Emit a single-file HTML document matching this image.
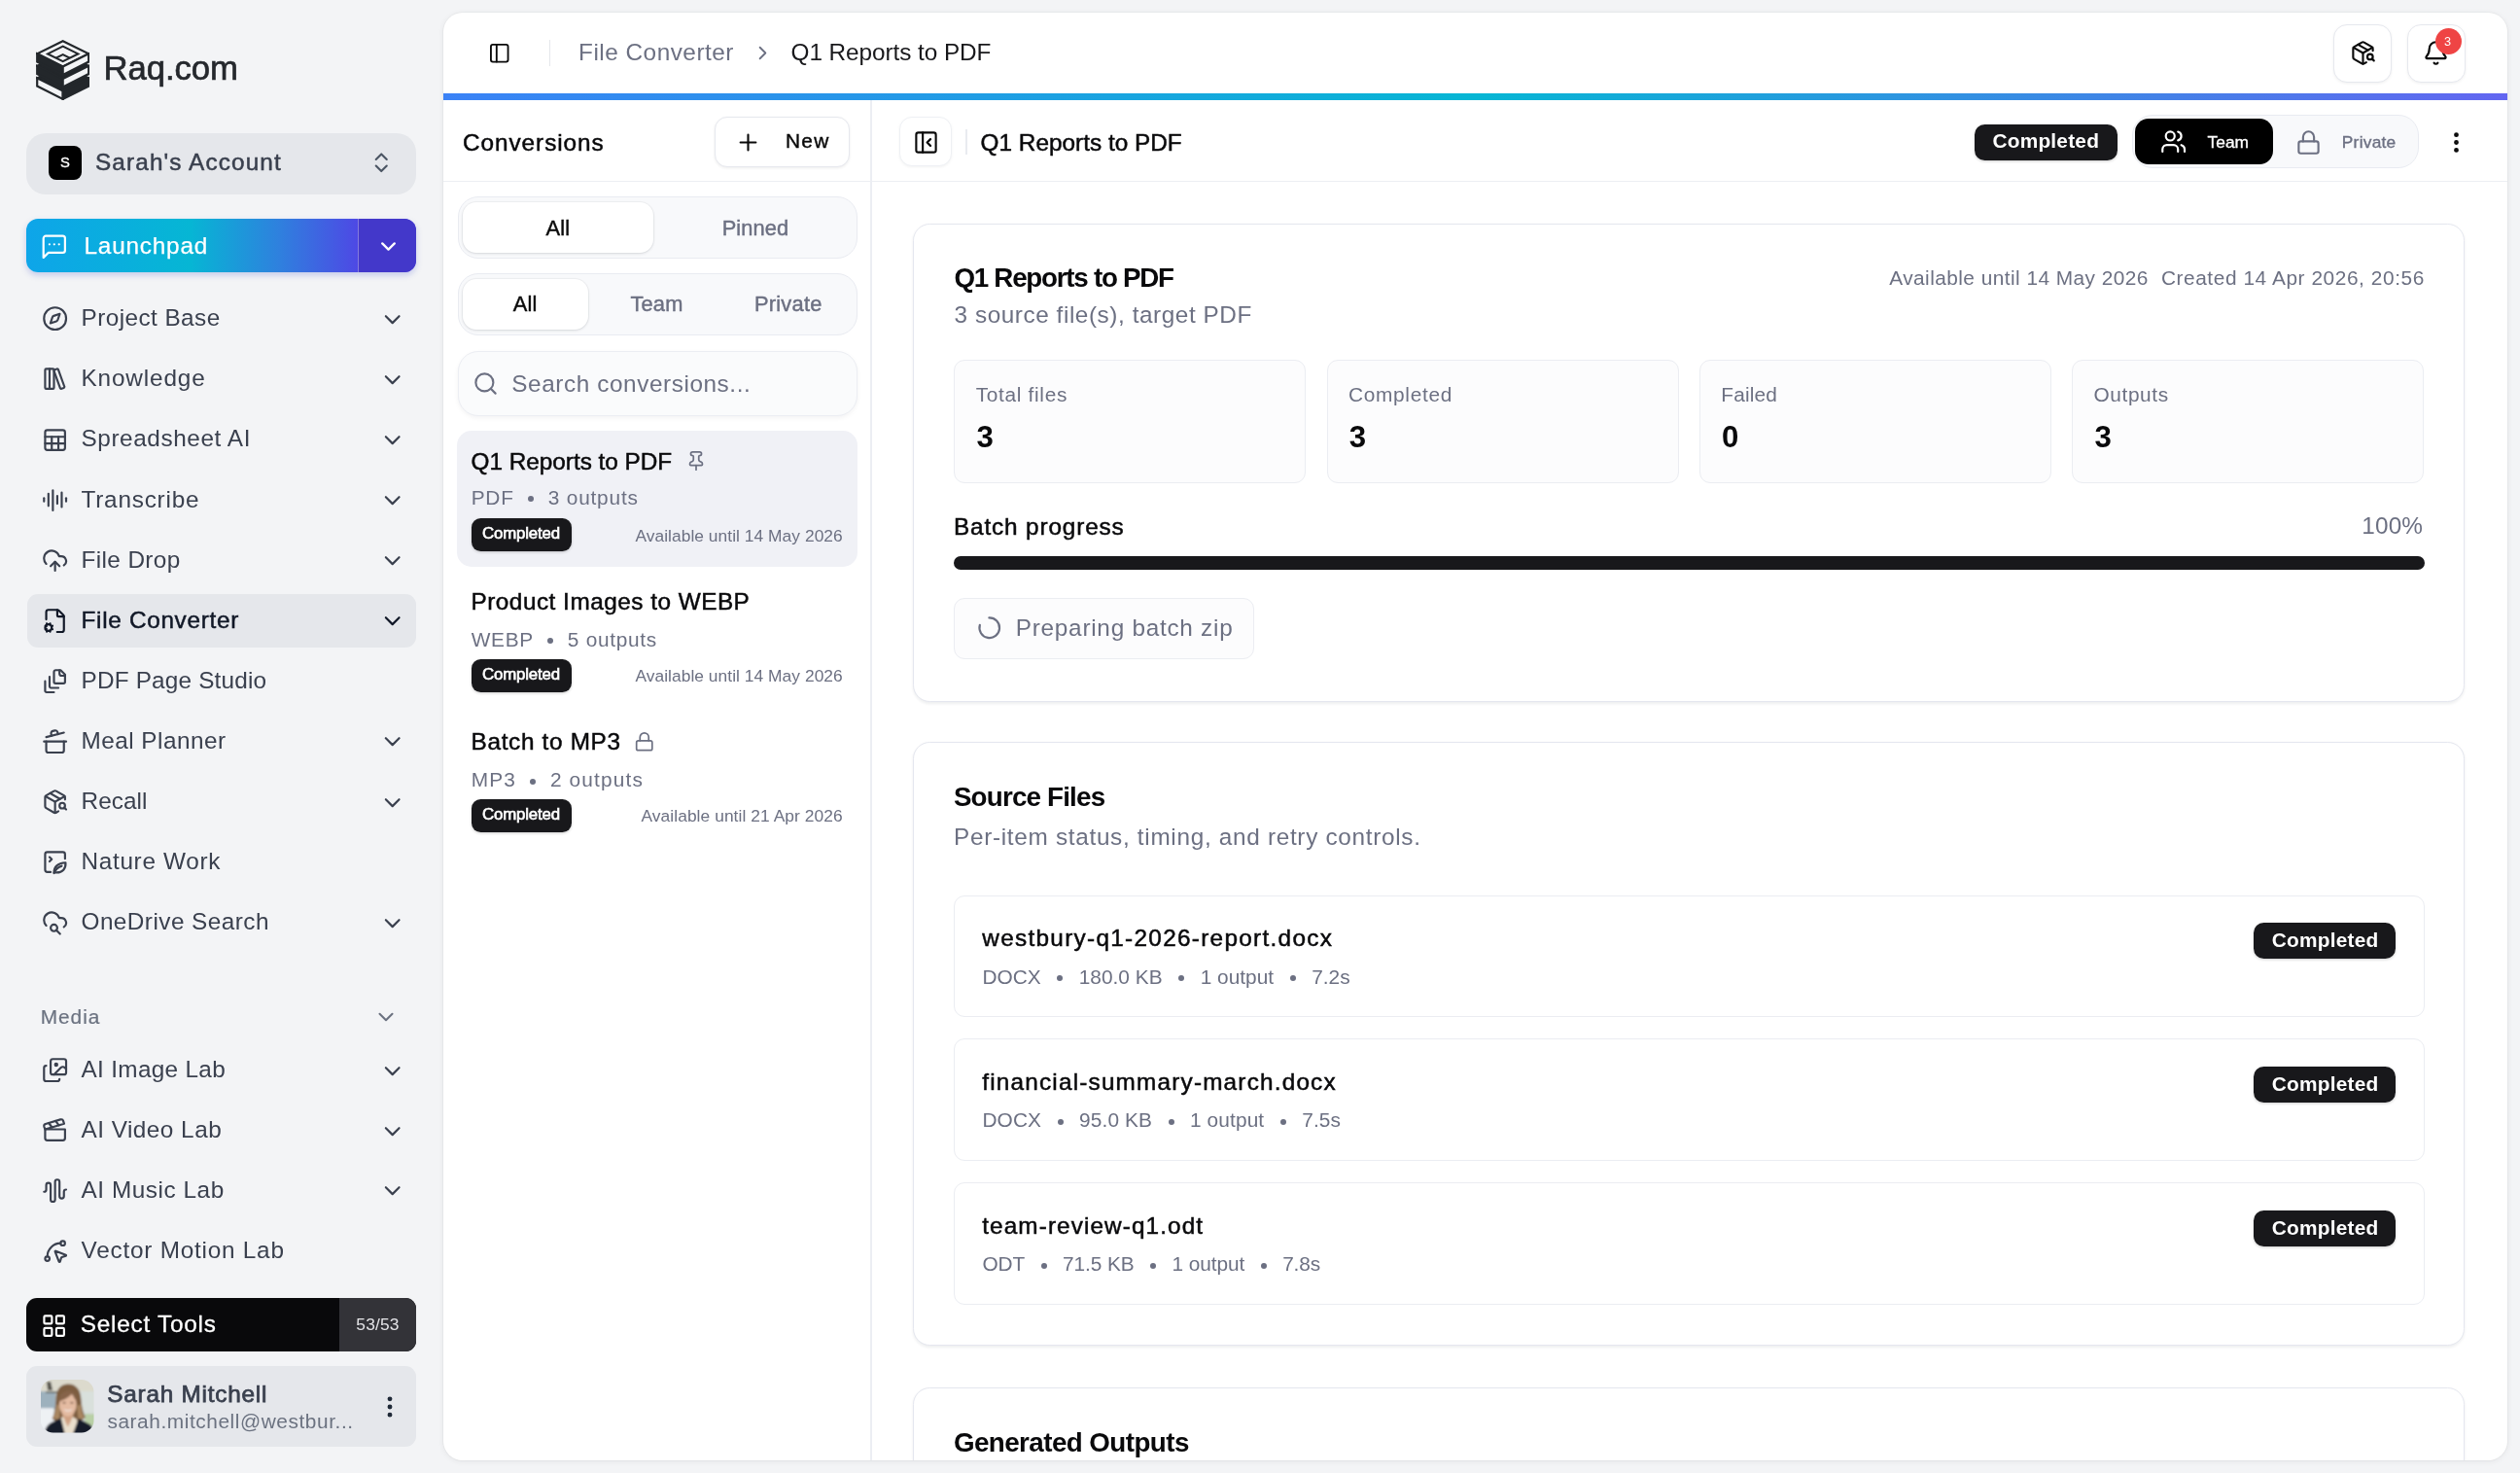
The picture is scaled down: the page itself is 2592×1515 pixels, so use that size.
<!DOCTYPE html>
<html lang="en"><head><meta charset="utf-8"><title>Raq.com – File Converter – Q1 Reports to PDF</title>
<style>
*{margin:0;padding:0}
html,body{width:2592px;height:1515px;overflow:hidden;background:#f3f4f6}
body{position:relative;font-family:"Liberation Sans", sans-serif;-webkit-font-smoothing:antialiased}
div,svg.ic,.t{position:absolute}
.t{line-height:0;white-space:nowrap;display:flex;align-items:flex-start}
.t span{display:block}
.b{display:block;width:6px;height:6px;border-radius:50%;background:currentColor;flex:none;margin-top:-1.500px}
#side{left:0;top:0;width:456px;height:1515px;will-change:transform}
#main{left:456px;top:13px;width:2122.75px;height:1488.5px;background:#fff;border-radius:20px;overflow:hidden;will-change:transform;box-shadow:0 0 0 1px rgba(15,23,42,.03),0 1px 6px rgba(15,23,42,.07)}
</style></head>
<body>
<aside id="side" style="position:absolute">
<svg class="ic" style="left:36.6px;top:40.8px" width="55.4" height="62.6" viewBox="-1.2 -1.200 55.4 62.6">
<defs><clipPath id="lh"><path d="M26.5 5.400 42.1 13.200 26.5 21 10.900 13.200Z"/></clipPath></defs>
<g stroke="#23272b" stroke-width="2.2" stroke-linejoin="miter">
<path d="M26.5 25.00L53 38.10 26.5 51.40 0 38.10Z" fill="#23272b"/><path d="M0 38.10L26.5 51.40V59.70L0 46.40Z" fill="#f3f4f6"/><path d="M26.5 51.40L53 38.10V46.40L26.5 59.70Z" fill="#23272b"/>
<path d="M26.5 12.50L53 25.60 26.5 38.90 0 25.60Z" fill="#23272b"/><path d="M0 25.60L26.5 38.90V47.20L0 33.90Z" fill="#23272b"/><path d="M26.5 38.90L53 25.60V33.90L26.5 47.20Z" fill="#f3f4f6"/>
<path d="M26.5 0.00L53 13.10 26.5 26.40 0 13.10Z" fill="#f3f4f6"/><path d="M0 13.10L26.5 26.40V34.70L0 21.40Z" fill="#23272b"/><path d="M26.5 26.40L53 13.10V21.40L26.5 34.70Z" fill="#f3f4f6"/>
<path d="M26.5 5.400 42.1 13.200 26.5 21 10.900 13.200Z" fill="#f3f4f6" stroke-width="2.1"/>
<path d="M10.900 21.700 26.5 13.900 42.1 21.700" fill="none" stroke-width="2.1" clip-path="url(#lh)"/>
</g></svg>
<span class="t" style="left:106.61px;top:70.46px;font-size:34.74px;color:#25282d;letter-spacing:-0.1px;-webkit-text-stroke:0.65px;">Raq.com</span>
<div style="left:27px;top:136.5px;width:401px;height:63px;border-radius:20px;background:#e5e7eb;"></div>
<div style="left:49.5px;top:150px;width:34.5px;height:34.5px;border-radius:8px;background:#000;"></div>
<span class="t" style="left:62.11px;top:167.48px;font-size:14.77px;color:#fff;-webkit-text-stroke:0.3px;">S</span>
<span class="t" style="left:98.03px;top:167.32px;font-size:24.34px;color:#3a404e;letter-spacing:1.12px;-webkit-text-stroke:0.49px;">Sarah&#x27;s Account</span>
<svg class="ic" style="left:378.5px;top:153.75px;color:#4b5563;" width="26.5" height="26.5" viewBox="0 0 24 24" fill="none" stroke="#4b5563" stroke-width="1.9" stroke-linecap="round" stroke-linejoin="round"><path d="m7 15 5 5 5-5"/><path d="m7 9 5-5 5 5"/></svg>
<div style="left:27px;top:225px;width:400.5px;height:55px;border-radius:12px;background:linear-gradient(90deg,#0ea5e9 0%,#06b6d4 42%,#2f80de 65%,#4f46e5 86%);box-shadow:0 3px 6px rgba(59,80,200,.25);overflow:hidden;"><div style="left:340.5px;top:0;width:60px;height:55px;background:#4338ca;border-left:1.500px solid rgba(255,255,255,.35)"></div></div>
<svg class="ic" style="left:40.8px;top:239.4px;color:#fff;" width="29.6" height="29.6" viewBox="0 0 24 24" fill="none" stroke="#fff" stroke-width="1.8" stroke-linecap="round" stroke-linejoin="round"><path d="M21 15a2 2 0 0 1-2 2H7l-4 4V5a2 2 0 0 1 2-2h14a2 2 0 0 1 2 2z"/><path d="M8 10h.01"/><path d="M12 10h.01"/><path d="M16 10h.01"/></svg>
<span class="t" style="left:86.53px;top:252.82px;font-size:24.34px;color:#fff;letter-spacing:0.79px;-webkit-text-stroke:0.25px;">Launchpad</span>
<svg class="ic" style="left:386.5px;top:241px;color:#fff;" width="25" height="25" viewBox="0 0 24 24" fill="none" stroke="#fff" stroke-width="2.2" stroke-linecap="round" stroke-linejoin="round"><path d="m6 9 6 6 6-6"/></svg>
<svg class="ic" style="left:42.6px;top:314.3px;color:#3a404e;" width="27.3" height="27.3" viewBox="0 0 24 24" fill="none" stroke="#3a404e" stroke-width="1.9" stroke-linecap="round" stroke-linejoin="round"><circle cx="12" cy="12" r="10"/><path d="m16.24 7.76-1.804 5.411a2 2 0 0 1-1.265 1.265L7.76 16.24l1.804-5.411a2 2 0 0 1 1.265-1.265z"/></svg>
<span class="t" style="left:83.53px;top:327.27px;font-size:24.34px;color:#3a404e;letter-spacing:0.43px;">Project Base</span>
<svg class="ic" style="left:390.3px;top:314.75px;color:#3a404e;" width="27.4" height="27.4" viewBox="0 0 24 24" fill="none" stroke="#3a404e" stroke-width="1.9" stroke-linecap="round" stroke-linejoin="round"><path d="m6 9 6 6 6-6"/></svg>
<svg class="ic" style="left:42.6px;top:376.4px;color:#3a404e;" width="27.3" height="27.3" viewBox="0 0 24 24" fill="none" stroke="#3a404e" stroke-width="1.9" stroke-linecap="round" stroke-linejoin="round"><rect width="8" height="18" x="3" y="3" rx="1"/><path d="M7 3v18"/><path d="M20.4 18.9c.2.5-.1 1.100-.6 1.300l-1.900.700c-.5.200-1.100-.100-1.300-.600L11.100 5.100c-.2-.500.100-1.100.600-1.300l1.900-.700c.5-.200 1.100.100 1.300.600Z"/></svg>
<span class="t" style="left:83.53px;top:389.37px;font-size:24.34px;color:#3a404e;letter-spacing:0.85px;">Knowledge</span>
<svg class="ic" style="left:390.3px;top:376.85px;color:#3a404e;" width="27.4" height="27.4" viewBox="0 0 24 24" fill="none" stroke="#3a404e" stroke-width="1.9" stroke-linecap="round" stroke-linejoin="round"><path d="m6 9 6 6 6-6"/></svg>
<svg class="ic" style="left:42.6px;top:438.5px;color:#3a404e;" width="27.3" height="27.3" viewBox="0 0 24 24" fill="none" stroke="#3a404e" stroke-width="1.9" stroke-linecap="round" stroke-linejoin="round"><rect width="18" height="18" x="3" y="3" rx="2" ry="2"/><line x1="3" x2="21" y1="9" y2="9"/><line x1="3" x2="21" y1="15" y2="15"/><line x1="9" x2="9" y1="9" y2="21"/><line x1="15" x2="15" y1="9" y2="21"/></svg>
<span class="t" style="left:83.53px;top:451.47px;font-size:24.34px;color:#3a404e;letter-spacing:0.58px;">Spreadsheet AI</span>
<svg class="ic" style="left:390.3px;top:438.95px;color:#3a404e;" width="27.4" height="27.4" viewBox="0 0 24 24" fill="none" stroke="#3a404e" stroke-width="1.9" stroke-linecap="round" stroke-linejoin="round"><path d="m6 9 6 6 6-6"/></svg>
<svg class="ic" style="left:42.6px;top:500.6px;color:#3a404e;" width="27.3" height="27.3" viewBox="0 0 24 24" fill="none" stroke="#3a404e" stroke-width="1.9" stroke-linecap="round" stroke-linejoin="round"><path d="M2 10v3"/><path d="M6 6v11"/><path d="M10 3v18"/><path d="M14 8v7"/><path d="M18 5v13"/><path d="M22 10v3"/></svg>
<span class="t" style="left:83.53px;top:513.57px;font-size:24.34px;color:#3a404e;letter-spacing:0.77px;">Transcribe</span>
<svg class="ic" style="left:390.3px;top:501.05px;color:#3a404e;" width="27.4" height="27.4" viewBox="0 0 24 24" fill="none" stroke="#3a404e" stroke-width="1.9" stroke-linecap="round" stroke-linejoin="round"><path d="m6 9 6 6 6-6"/></svg>
<svg class="ic" style="left:42.6px;top:562.7px;color:#3a404e;" width="27.3" height="27.3" viewBox="0 0 24 24" fill="none" stroke="#3a404e" stroke-width="1.9" stroke-linecap="round" stroke-linejoin="round"><path d="M12 13v8"/><path d="M4 14.899A7 7 0 1 1 15.71 8h1.79a4.5 4.5 0 0 1 2.5 8.242"/><path d="m8 17 4-4 4 4"/></svg>
<span class="t" style="left:83.53px;top:575.67px;font-size:24.34px;color:#3a404e;letter-spacing:0.38px;">File Drop</span>
<svg class="ic" style="left:390.3px;top:563.15px;color:#3a404e;" width="27.4" height="27.4" viewBox="0 0 24 24" fill="none" stroke="#3a404e" stroke-width="1.9" stroke-linecap="round" stroke-linejoin="round"><path d="m6 9 6 6 6-6"/></svg>
<div style="left:28px;top:610.7px;width:400px;height:55.5px;border-radius:11px;background:#e5e7eb;"></div>
<svg class="ic" style="left:42.6px;top:624.8px;color:#111827;" width="27.3" height="27.3" viewBox="0 0 24 24" fill="none" stroke="#111827" stroke-width="1.9" stroke-linecap="round" stroke-linejoin="round"><path d="M13.850 22H18a2 2 0 0 0 2-2V8a2 2 0 0 0-.586-1.414l-4-4A2 2 0 0 0 14 2H6a2 2 0 0 0-2 2v6.600"/><path d="M14 2v5a1 1 0 0 0 1 1h5"/><path d="m3.305 19.530.923-.382"/><path d="m4.228 16.852-.924-.383"/><path d="m4.852 15.228-.383-.923"/><path d="m4.852 20.772-.383.924"/><path d="m7.148 15.228.383-.923"/><path d="m7.530 21.696-.382-.924"/><path d="m8.772 16.852.923-.383"/><path d="m8.772 19.148.923.383"/><circle cx="6" cy="18" r="3"/></svg>
<span class="t" style="left:83.53px;top:637.77px;font-size:24.34px;color:#111827;letter-spacing:0.69px;-webkit-text-stroke:0.49px;">File Converter</span>
<svg class="ic" style="left:390.3px;top:625.25px;color:#111827;" width="27.4" height="27.4" viewBox="0 0 24 24" fill="none" stroke="#111827" stroke-width="1.9" stroke-linecap="round" stroke-linejoin="round"><path d="m6 9 6 6 6-6"/></svg>
<svg class="ic" style="left:42.6px;top:686.9px;color:#3a404e;" width="27.3" height="27.3" viewBox="0 0 24 24" fill="none" stroke="#3a404e" stroke-width="1.9" stroke-linecap="round" stroke-linejoin="round"><path d="M21 7h-3a2 2 0 0 1-2-2V2"/><path d="M21 6v6.5c0 .8-.7 1.5-1.5 1.5h-7c-.8 0-1.500-.7-1.500-1.500v-9c0-.8.7-1.500 1.500-1.500H17Z"/><path d="M7 8v8.800c0 .3.200.6.4.8.2.2.5.4.8.4H15"/><path d="M3 12v8.800c0 .3.200.6.4.8.2.2.5.4.8.4H11"/></svg>
<span class="t" style="left:83.53px;top:699.87px;font-size:24.34px;color:#3a404e;letter-spacing:0.18px;">PDF Page Studio</span>
<svg class="ic" style="left:42.6px;top:749px;color:#3a404e;" width="27.3" height="27.3" viewBox="0 0 24 24" fill="none" stroke="#3a404e" stroke-width="1.9" stroke-linecap="round" stroke-linejoin="round"><path d="M2 12h20"/><path d="M20 12v8a2 2 0 0 1-2 2H6a2 2 0 0 1-2-2v-8"/><path d="m4 8 16-4"/><path d="m8.860 6.780-.45-1.810a2 2 0 0 1 1.450-2.430l1.940-.48a2 2 0 0 1 2.430 1.460l.45 1.800"/></svg>
<span class="t" style="left:83.53px;top:761.97px;font-size:24.34px;color:#3a404e;letter-spacing:0.47px;">Meal Planner</span>
<svg class="ic" style="left:390.3px;top:749.45px;color:#3a404e;" width="27.4" height="27.4" viewBox="0 0 24 24" fill="none" stroke="#3a404e" stroke-width="1.9" stroke-linecap="round" stroke-linejoin="round"><path d="m6 9 6 6 6-6"/></svg>
<svg class="ic" style="left:42.6px;top:811.1px;color:#3a404e;" width="27.3" height="27.3" viewBox="0 0 24 24" fill="none" stroke="#3a404e" stroke-width="1.9" stroke-linecap="round" stroke-linejoin="round"><path d="M21 10V8a2 2 0 0 0-1-1.730l-7-4a2 2 0 0 0-2 0l-7 4A2 2 0 0 0 3 8v8a2 2 0 0 0 1 1.730l7 4a2 2 0 0 0 2 0l2-1.140"/><path d="m7.500 4.270 9 5.150"/><polyline points="3.290 7 12 12 20.710 7"/><line x1="12" x2="12" y1="22" y2="12"/><circle cx="18.500" cy="15.500" r="2.500"/><path d="M20.270 17.270 22 19"/></svg>
<span class="t" style="left:83.53px;top:824.07px;font-size:24.34px;color:#3a404e;letter-spacing:0.07px;">Recall</span>
<svg class="ic" style="left:390.3px;top:811.55px;color:#3a404e;" width="27.4" height="27.4" viewBox="0 0 24 24" fill="none" stroke="#3a404e" stroke-width="1.9" stroke-linecap="round" stroke-linejoin="round"><path d="m6 9 6 6 6-6"/></svg>
<svg class="ic" style="left:42.6px;top:873.2px;color:#3a404e;" width="27.3" height="27.3" viewBox="0 0 24 24" fill="none" stroke="#3a404e" stroke-width="1.9" stroke-linecap="round" stroke-linejoin="round"><path d="M21 9V5a2 2 0 0 0-2-2H5a2 2 0 0 0-2 2v14a2 2 0 0 0 2 2h3"/><path d="m7 7.500 2 2-2 2"/><path d="M11 21.500c0-5 3-8.500 10.500-9 .3 5.500-2.700 9-8 9-1 0-1.800-.2-2.500-.5"/><path d="M11 22c1.500-3.500 4-5.500 7-6.500"/></svg>
<span class="t" style="left:83.53px;top:886.17px;font-size:24.34px;color:#3a404e;letter-spacing:0.68px;">Nature Work</span>
<svg class="ic" style="left:42.6px;top:935.3px;color:#3a404e;" width="27.3" height="27.3" viewBox="0 0 24 24" fill="none" stroke="#3a404e" stroke-width="1.9" stroke-linecap="round" stroke-linejoin="round"><path d="M4 14.899A7 7 0 1 1 15.710 8h1.790a4.500 4.500 0 0 1 2.500 8.242"/><circle cx="11" cy="17" r="3"/><path d="m13.200 19.200 3.300 3.300"/></svg>
<span class="t" style="left:83.53px;top:948.27px;font-size:24.34px;color:#3a404e;letter-spacing:0.45px;">OneDrive Search</span>
<svg class="ic" style="left:390.3px;top:935.75px;color:#3a404e;" width="27.4" height="27.4" viewBox="0 0 24 24" fill="none" stroke="#3a404e" stroke-width="1.9" stroke-linecap="round" stroke-linejoin="round"><path d="m6 9 6 6 6-6"/></svg>
<span class="t" style="left:41.67px;top:1045.77px;font-size:20.85px;color:#6b7280;letter-spacing:0.98px;-webkit-text-stroke:0.2px;">Media</span>
<svg class="ic" style="left:384px;top:1032.5px;color:#6b7280;" width="26" height="26" viewBox="0 0 24 24" fill="none" stroke="#6b7280" stroke-width="1.9" stroke-linecap="round" stroke-linejoin="round"><path d="m6 9 6 6 6-6"/></svg>
<svg class="ic" style="left:42.6px;top:1087.4px;color:#3a404e;" width="27.3" height="27.3" viewBox="0 0 24 24" fill="none" stroke="#3a404e" stroke-width="1.9" stroke-linecap="round" stroke-linejoin="round"><path d="m22 11-1.296-1.296a2.4 2.4 0 0 0-3.408 0L11 16"/><path d="M4 8a2 2 0 0 0-2 2v10a2 2 0 0 0 2 2h10a2 2 0 0 0 2-2"/><circle cx="13" cy="7" r="1" fill="currentColor"/><rect x="8" y="2" width="14" height="14" rx="2"/></svg>
<span class="t" style="left:83.53px;top:1100.37px;font-size:24.34px;color:#3a404e;letter-spacing:0.32px;">AI Image Lab</span>
<svg class="ic" style="left:390.3px;top:1087.85px;color:#3a404e;" width="27.4" height="27.4" viewBox="0 0 24 24" fill="none" stroke="#3a404e" stroke-width="1.9" stroke-linecap="round" stroke-linejoin="round"><path d="m6 9 6 6 6-6"/></svg>
<svg class="ic" style="left:42.6px;top:1149.2px;color:#3a404e;" width="27.3" height="27.3" viewBox="0 0 24 24" fill="none" stroke="#3a404e" stroke-width="1.9" stroke-linecap="round" stroke-linejoin="round"><path d="M20.200 6 3 11l-.9-2.400c-.3-1.100.3-2.200 1.300-2.500l13.500-4c1.100-.3 2.200.3 2.500 1.300Z"/><path d="m6.200 5.300 3.100 3.900"/><path d="m12.400 3.400 3.100 4"/><path d="M3 11h18v8a2 2 0 0 1-2 2H5a2 2 0 0 1-2-2Z"/></svg>
<span class="t" style="left:83.53px;top:1162.17px;font-size:24.34px;color:#3a404e;letter-spacing:0.48px;">AI Video Lab</span>
<svg class="ic" style="left:390.3px;top:1149.65px;color:#3a404e;" width="27.4" height="27.4" viewBox="0 0 24 24" fill="none" stroke="#3a404e" stroke-width="1.9" stroke-linecap="round" stroke-linejoin="round"><path d="m6 9 6 6 6-6"/></svg>
<svg class="ic" style="left:42.6px;top:1211px;color:#3a404e;" width="27.3" height="27.3" viewBox="0 0 24 24" fill="none" stroke="#3a404e" stroke-width="1.9" stroke-linecap="round" stroke-linejoin="round"><path d="M2 13a2 2 0 0 0 2-2V7a2 2 0 0 1 4 0v13a2 2 0 0 0 4 0V4a2 2 0 0 1 4 0v13a2 2 0 0 0 4 0v-4a2 2 0 0 1 2-2"/></svg>
<span class="t" style="left:83.53px;top:1223.97px;font-size:24.34px;color:#3a404e;letter-spacing:0.55px;">AI Music Lab</span>
<svg class="ic" style="left:390.3px;top:1211.45px;color:#3a404e;" width="27.4" height="27.4" viewBox="0 0 24 24" fill="none" stroke="#3a404e" stroke-width="1.9" stroke-linecap="round" stroke-linejoin="round"><path d="m6 9 6 6 6-6"/></svg>
<svg class="ic" style="left:42.6px;top:1272.8px;color:#3a404e;" width="27.3" height="27.3" viewBox="0 0 24 24" fill="none" stroke="#3a404e" stroke-width="1.9" stroke-linecap="round" stroke-linejoin="round"><path d="M12.034 12.681a.498.498 0 0 1 .647-.647l9 3.500a.5.5 0 0 1-.033.943l-3.444 1.068a1 1 0 0 0-.660.660l-1.067 3.443a.5.5 0 0 1-.943.033z"/><path d="M5 17A12 12 0 0 1 17 5"/><circle cx="19" cy="5" r="2"/><circle cx="5" cy="19" r="2"/></svg>
<span class="t" style="left:83.53px;top:1285.77px;font-size:24.34px;color:#3a404e;letter-spacing:0.77px;">Vector Motion Lab</span>
<div style="left:27px;top:1335px;width:400.5px;height:55px;border-radius:11px;background:#09090b;overflow:hidden;"><div style="left:322px;top:0;width:80px;height:55px;background:#333338"></div></div>
<svg class="ic" style="left:42.1px;top:1350.35px;color:#fff;" width="27.3" height="27.3" viewBox="0 0 24 24" fill="none" stroke="#fff" stroke-width="1.9" stroke-linecap="round" stroke-linejoin="round"><rect width="7" height="7" x="3" y="3" rx="1"/><rect width="7" height="7" x="14" y="3" rx="1"/><rect width="7" height="7" x="14" y="14" rx="1"/><rect width="7" height="7" x="3" y="14" rx="1"/></svg>
<span class="t" style="left:82.78px;top:1361.82px;font-size:24.34px;color:#fff;letter-spacing:0.77px;-webkit-text-stroke:0.3px;">Select Tools</span>
<span class="t" style="left:366.31px;top:1362.23px;font-size:17.37px;color:#e4e4e7;letter-spacing:0.19px;">53/53</span>
<div style="left:27px;top:1404.5px;width:400.5px;height:83px;border-radius:11px;background:#e5e7eb;"></div>
<svg class="ic" style="left:42px;top:1419px" width="54.5" height="54.5" viewBox="0 0 54 54">
<defs><clipPath id="av"><rect width="54" height="54" rx="12.5"/></clipPath><filter id="bl" x="-10%" y="-10%" width="120%" height="120%"><feGaussianBlur stdDeviation="0.9"/></filter></defs>
<g clip-path="url(#av)"><g filter="url(#bl)">
<rect x="-3" y="-3" width="60" height="60" fill="#d3dad6"/>
<rect x="-3" y="-3" width="60" height="15" fill="#dcdacd"/>
<rect x="-3" y="12" width="18" height="18" fill="#9db1bd"/>
<rect x="-3" y="29" width="16" height="28" fill="#eef1f4"/>
<rect x="40" y="12" width="17" height="22" fill="#d9e0dc"/>
<rect x="45" y="35" width="12" height="12" fill="#b9d0a6"/>
<path d="M6 2h4l2 9H7Z" fill="#55534c"/><rect x="5" y="12" width="12" height="1.600" fill="#5b5f5c"/>
<path d="M28 4.500c8 0 12.500 6 13 15 .5 8 2 14 4.500 19L39 43H17l-5.500-3c2.500-5 3.500-12 3.800-20C15.600 10 20 4.500 28 4.500Z" fill="#7d5d40"/>
<path d="M12 39c2.500-4 3.500-9 3.800-14l4 2-1 14Zm32.500 0c-2.500-4-3.500-9-3.700-14l-4 2 1.500 14Z" fill="#a98661"/>
<path d="M22 34h11v10l-5.500 8L22 44Z" fill="#d0a183"/>
<ellipse cx="27.600" cy="25.500" rx="8.800" ry="11.800" fill="#e4bba2"/>
<path d="M18.600 22c.4-6 3.500-10.500 9.400-10.500 5.500 0 8.500 4.500 8.700 10.500-2.500-2.500-4-5.500-4.700-8-2.500 3-7.500 6.500-13.400 8Z" fill="#86644a"/>
<ellipse cx="23.800" cy="23.500" rx="1.800" ry=".8" fill="#6b4a3a"/><ellipse cx="31.600" cy="23.500" rx="1.800" ry=".8" fill="#6b4a3a"/>
<path d="M23.500 30c2.500 1.500 6 1.500 8.500 0-1 3-7.500 3-8.500 0Z" fill="#f6eeea"/>
<path d="M17.500 40.500 23 38l4.500 9 5-9 4.500 2.500L36 57H17Z" fill="#eadfcd"/>
<path d="M24 41l3.500 7 3.800-7c-2 1.500-5.500 1.500-7.300 0Z" fill="#d3a688"/>
<path d="M3.500 57c.5-7 3-11.500 8.500-14l8.500-4 4.500 18Zm51 0c0-6-2-10.500-6.500-12.500L38.500 39.500 32 57Z" fill="#151a2c"/>
</g></g></svg>
<span class="t" style="left:110.28px;top:1433.57px;font-size:24.34px;color:#3a404e;letter-spacing:0.77px;-webkit-text-stroke:0.75px;">Sarah Mitchell</span>
<span class="t" style="left:110.42px;top:1461.77px;font-size:20.85px;color:#6b7280;letter-spacing:0.57px;">sarah.mitchell@westbur...</span>
<svg class="ic" style="left:386.6px;top:1432.75px;color:#1f2937;" width="28" height="28" viewBox="0 0 24 24" fill="none" stroke="#1f2937" stroke-width="2.2" stroke-linecap="round" stroke-linejoin="round"><circle cx="12" cy="12" r="1"/><circle cx="12" cy="5" r="1"/><circle cx="12" cy="19" r="1"/></svg>
</aside>
<main id="main" style="position:absolute">
<svg class="ic" style="left:45.75px;top:30.25px;color:#0a0a0a;" width="23.5" height="23.5" viewBox="0 0 24 24" fill="none" stroke="#0a0a0a" stroke-width="1.9" stroke-linecap="round" stroke-linejoin="round"><rect width="18" height="18" x="3" y="3" rx="2"/><path d="M9 3v18"/></svg>
<div style="left:108.75px;top:28px;width:1.5px;height:26.5px;background:#e5e7eb;"></div>
<span class="t" style="left:139.03px;top:41.07px;font-size:24.34px;color:#6c7082;letter-spacing:0.51px;">File Converter</span>
<svg class="ic" style="left:316.5px;top:30px;color:#6c7082;" width="23" height="23" viewBox="0 0 24 24" fill="none" stroke="#6c7082" stroke-width="1.9" stroke-linecap="round" stroke-linejoin="round"><path d="m9 18 6-6-6-6"/></svg>
<span class="t" style="left:357.53px;top:41.07px;font-size:24.34px;color:#18181b;letter-spacing:-0.06px;">Q1 Reports to PDF</span>
<div style="left:1943.5px;top:11.5px;width:60.75px;height:60px;border-radius:14px;background:#fff;border:1.500px solid #e6e8ee;box-shadow:0 1px 3px rgba(0,0,0,.06);box-sizing:border-box;"></div>
<svg class="ic" style="left:1961.25px;top:28px;color:#0a0a0a;" width="27" height="27" viewBox="0 0 24 24" fill="none" stroke="#0a0a0a" stroke-width="1.9" stroke-linecap="round" stroke-linejoin="round"><path d="M21 10V8a2 2 0 0 0-1-1.730l-7-4a2 2 0 0 0-2 0l-7 4A2 2 0 0 0 3 8v8a2 2 0 0 0 1 1.730l7 4a2 2 0 0 0 2 0l2-1.140"/><path d="m7.500 4.270 9 5.150"/><polyline points="3.290 7 12 12 20.710 7"/><line x1="12" x2="12" y1="22" y2="12"/><circle cx="18.500" cy="15.500" r="2.500"/><path d="M20.270 17.270 22 19"/></svg>
<div style="left:2019.75px;top:11.5px;width:60px;height:60px;border-radius:14px;background:#fff;border:1.500px solid #e6e8ee;box-shadow:0 1px 3px rgba(0,0,0,.06);box-sizing:border-box;"></div>
<svg class="ic" style="left:2035.75px;top:28.25px;color:#0a0a0a;" width="27" height="27" viewBox="0 0 24 24" fill="none" stroke="#0a0a0a" stroke-width="1.9" stroke-linecap="round" stroke-linejoin="round"><path d="M10.268 21a2 2 0 0 0 3.464 0"/><path d="M3.262 15.326A1 1 0 0 0 4 17h16a1 1 0 0 0 .740-1.673C19.410 13.956 18 12.499 18 8A6 6 0 0 0 6 8c0 4.499-1.411 5.956-2.738 7.326"/></svg>
<div style="left:2049px;top:15.75px;width:27px;height:27px;border-radius:14px;background:#ef4444;"></div>
<span class="t" style="left:2057.99px;top:30.2px;font-size:12.69px;color:#fff;">3</span>
<div style="left:0px;top:82.75px;width:2122.75px;height:7.5px;background:linear-gradient(90deg,#3b82f6 0%,#06b6d4 50%,#6366f1 100%);"></div>
<div style="left:0px;top:172.5px;width:2122.75px;height:1.5px;background:#eceef3;"></div>
<div style="left:439.25px;top:90.25px;width:1.5px;height:1398.25px;background:#eceef3;"></div>
<span class="t" style="left:20.03px;top:133.57px;font-size:24.34px;color:#09090b;letter-spacing:0.95px;-webkit-text-stroke:0.49px;">Conversions</span>
<div style="left:278.5px;top:106.5px;width:139.25px;height:52.25px;border-radius:13px;background:#fff;border:1.500px solid #e6e8ee;box-shadow:0 1px 3px rgba(0,0,0,.07);box-sizing:border-box;"></div>
<svg class="ic" style="left:300.25px;top:119.5px;color:#0a0a0a;" width="27" height="27" viewBox="0 0 24 24" fill="none" stroke="#0a0a0a" stroke-width="1.9" stroke-linecap="round" stroke-linejoin="round"><path d="M5 12h14"/><path d="M12 5v14"/></svg>
<span class="t" style="left:351.92px;top:132.27px;font-size:20.85px;color:#0a0a0a;letter-spacing:1.38px;-webkit-text-stroke:0.42px;">New</span>
<div style="left:14.5px;top:189px;width:411px;height:64.25px;border-radius:21px;background:#f8f9fb;border:1.500px solid #e9ebf1;box-sizing:border-box;"></div><div style="left:19.5px;top:194.5px;width:196.75px;height:52.75px;border-radius:14px;background:#fff;box-shadow:0 1px 3px rgba(15,23,42,.12),0 0 0 1px rgba(15,23,42,.03);"></div>
<span class="t" style="left:105.38px;top:221.93px;font-size:21.84px;color:#0a0a0a;letter-spacing:0.26px;-webkit-text-stroke:0.44px;">All</span>
<span class="t" style="left:286.63px;top:221.93px;font-size:21.84px;color:#6c7082;letter-spacing:0.11px;-webkit-text-stroke:0.44px;">Pinned</span>
<div style="left:14.5px;top:268.25px;width:411px;height:63.25px;border-radius:21px;background:#f8f9fb;border:1.500px solid #e9ebf1;box-sizing:border-box;"></div><div style="left:19.5px;top:273.75px;width:129.75px;height:51.75px;border-radius:14px;background:#fff;box-shadow:0 1px 3px rgba(15,23,42,.12),0 0 0 1px rgba(15,23,42,.03);"></div>
<span class="t" style="left:71.63px;top:299.93px;font-size:21.84px;color:#0a0a0a;letter-spacing:0.26px;-webkit-text-stroke:0.44px;">All</span>
<span class="t" style="left:192.38px;top:299.93px;font-size:21.84px;color:#6c7082;letter-spacing:0.21px;-webkit-text-stroke:0.44px;">Team</span>
<span class="t" style="left:319.88px;top:299.93px;font-size:21.84px;color:#6c7082;letter-spacing:0.27px;-webkit-text-stroke:0.44px;">Private</span>
<div style="left:14.5px;top:347.5px;width:411px;height:67px;border-radius:21px;background:#fafbfc;border:1.500px solid #eceef3;box-shadow:0 2px 5px rgba(15,23,42,.05);box-sizing:border-box;"></div>
<svg class="ic" style="left:30.25px;top:368.25px;color:#6c7082;" width="27" height="27" viewBox="0 0 24 24" fill="none" stroke="#6c7082" stroke-width="1.9" stroke-linecap="round" stroke-linejoin="round"><circle cx="11" cy="11" r="8"/><path d="m21 21-4.300-4.300"/></svg>
<span class="t" style="left:70.28px;top:381.82px;font-size:24.34px;color:#6c7082;letter-spacing:0.58px;">Search conversions...</span>
<div style="left:13.75px;top:430px;width:412.25px;height:139.75px;border-radius:15px;background:#f0f1f6;"></div>
<span class="t" style="left:28.53px;top:461.57px;font-size:24.34px;color:#09090b;letter-spacing:-0.01px;-webkit-text-stroke:0.49px;">Q1 Reports to PDF</span>
<svg class="ic" style="left:248.5px;top:449.75px;color:#6c7082;" width="22" height="22" viewBox="0 0 24 24" fill="none" stroke="#6c7082" stroke-width="1.9" stroke-linecap="round" stroke-linejoin="round"><path d="M12 17v5"/><path d="M9 10.760a2 2 0 0 1-1.110 1.790l-1.780.900A2 2 0 0 0 5 15.240V16a1 1 0 0 0 1 1h12a1 1 0 0 0 1-1v-.760a2 2 0 0 0-1.110-1.790l-1.780-.900A2 2 0 0 1 15 10.760V7a1 1 0 0 1 1-1 2 2 0 0 0 0-4H8a2 2 0 0 0 0 4 1 1 0 0 1 1 1z"/></svg>
<span class="t" style="left:28.67px;top:498.77px;font-size:20.85px;color:#6c7082;letter-spacing:0.8px;"><span>PDF</span><i class="b" style="margin:-1.500px 14.5px 0"></i><span>3 outputs</span></span>
<div style="left:28.5px;top:520px;width:103.3px;height:33.8px;border-radius:9.5px;background:#18181b;box-shadow:0 1px 3px rgba(0,0,0,.2);"></div>
<span class="t" style="left:40.08px;top:536.16px;font-size:16.85px;color:#fff;letter-spacing:-0.19px;-webkit-text-stroke:0.65px;">Completed</span>
<span class="t" style="left:197.41px;top:537.78px;font-size:17.37px;color:#6c7082;letter-spacing:0.05px;">Available until 14 May 2026</span>
<span class="t" style="left:28.53px;top:605.87px;font-size:24.34px;color:#09090b;letter-spacing:0.5px;-webkit-text-stroke:0.49px;">Product Images to WEBP</span>
<span class="t" style="left:28.67px;top:644.77px;font-size:20.85px;color:#6c7082;letter-spacing:0.7px;"><span>WEBP</span><i class="b" style="margin:-1.500px 14.5px 0"></i><span>5 outputs</span></span>
<div style="left:28.5px;top:665px;width:103.3px;height:33.8px;border-radius:9.5px;background:#18181b;box-shadow:0 1px 3px rgba(0,0,0,.2);"></div>
<span class="t" style="left:40.08px;top:681.16px;font-size:16.85px;color:#fff;letter-spacing:-0.19px;-webkit-text-stroke:0.65px;">Completed</span>
<span class="t" style="left:197.41px;top:682.28px;font-size:17.37px;color:#6c7082;letter-spacing:0.05px;">Available until 14 May 2026</span>
<span class="t" style="left:28.53px;top:749.57px;font-size:24.34px;color:#09090b;letter-spacing:0.68px;-webkit-text-stroke:0.49px;">Batch to MP3</span>
<svg class="ic" style="left:196.25px;top:739.45px;color:#6c7082;" width="21.5" height="21.5" viewBox="0 0 24 24" fill="none" stroke="#6c7082" stroke-width="1.9" stroke-linecap="round" stroke-linejoin="round"><rect width="18" height="11" x="3" y="11" rx="2" ry="2"/><path d="M7 11V7a5 5 0 0 1 10 0v4"/></svg>
<span class="t" style="left:28.67px;top:789.27px;font-size:20.85px;color:#6c7082;letter-spacing:1.14px;"><span>MP3</span><i class="b" style="margin:-1.500px 14.5px 0"></i><span>2 outputs</span></span>
<div style="left:28.5px;top:809.3px;width:103.3px;height:33.8px;border-radius:9.5px;background:#18181b;box-shadow:0 1px 3px rgba(0,0,0,.2);"></div>
<span class="t" style="left:40.08px;top:825.46px;font-size:16.85px;color:#fff;letter-spacing:-0.19px;-webkit-text-stroke:0.65px;">Completed</span>
<span class="t" style="left:203.51px;top:826.48px;font-size:17.37px;color:#6c7082;letter-spacing:0.07px;">Available until 21 Apr 2026</span>
<div style="left:469px;top:107px;width:53.75px;height:51.25px;border-radius:13px;background:#fff;border:1.500px solid #eef0f4;box-shadow:0 1px 3px rgba(0,0,0,.05);box-sizing:border-box;"></div>
<svg class="ic" style="left:483px;top:119.5px;color:#0a0a0a;" width="27" height="27" viewBox="0 0 24 24" fill="none" stroke="#0a0a0a" stroke-width="1.9" stroke-linecap="round" stroke-linejoin="round"><rect width="18" height="18" x="3" y="3" rx="2"/><path d="M9 3v18"/><path d="m16 15-3-3 3-3"/></svg>
<div style="left:537px;top:119.5px;width:1.5px;height:26.25px;background:#e9ebf0;"></div>
<span class="t" style="left:552.53px;top:133.57px;font-size:24.34px;color:#09090b;letter-spacing:0.02px;-webkit-text-stroke:0.49px;">Q1 Reports to PDF</span>
<div style="left:1575.25px;top:115px;width:146.5px;height:36.5px;border-radius:10.5px;background:#18181b;box-shadow:0 1px 3px rgba(0,0,0,.2);"></div>
<span class="t" style="left:1593.42px;top:132.27px;font-size:20.85px;color:#fff;font-weight:700;letter-spacing:0.22px;">Completed</span>
<div style="left:1736.5px;top:104.5px;width:295.25px;height:55.5px;border-radius:21px;background:#f8f9fb;border:1.500px solid #e9ebf1;box-sizing:border-box;"></div>
<div style="left:1740.25px;top:109px;width:142px;height:47.25px;border-radius:14px;background:#000;"></div>
<svg class="ic" style="left:1765.6px;top:119.35px;color:#fff;" width="27.3" height="27.3" viewBox="0 0 24 24" fill="none" stroke="#fff" stroke-width="1.9" stroke-linecap="round" stroke-linejoin="round"><path d="M16 21v-2a4 4 0 0 0-4-4H6a4 4 0 0 0-4 4v2"/><circle cx="9" cy="7" r="4"/><path d="M22 21v-2a4 4 0 0 0-3-3.870"/><path d="M16 3.130a4 4 0 0 1 0 7.750"/></svg>
<span class="t" style="left:1814.56px;top:132.98px;font-size:17.37px;color:#fff;-webkit-text-stroke:0.35px;">Team</span>
<svg class="ic" style="left:1905.25px;top:119.5px;color:#6c7082;" width="27" height="27" viewBox="0 0 24 24" fill="none" stroke="#6c7082" stroke-width="1.9" stroke-linecap="round" stroke-linejoin="round"><rect width="18" height="11" x="3" y="11" rx="2" ry="2"/><path d="M7 11V7a5 5 0 0 1 10 0v4"/></svg>
<span class="t" style="left:1952.81px;top:132.98px;font-size:17.37px;color:#6c7082;letter-spacing:0.24px;-webkit-text-stroke:0.35px;">Private</span>
<svg class="ic" style="left:2056.6px;top:119.5px;color:#0a0a0a;" width="27" height="27" viewBox="0 0 24 24" fill="none" stroke="#0a0a0a" stroke-width="2.3" stroke-linecap="round" stroke-linejoin="round"><circle cx="12" cy="12" r="1"/><circle cx="12" cy="5" r="1"/><circle cx="12" cy="19" r="1"/></svg>
<div style="left:482.8px;top:217.3px;width:1596.7px;height:491.5px;border-radius:17.5px;background:#fff;border:1.700px solid #e5e7ef;box-shadow:0 1.500px 3px rgba(15,23,42,.07);box-sizing:border-box;"></div>
<span class="t" style="left:525.39px;top:273.13px;font-size:27.77px;color:#09090b;font-weight:700;letter-spacing:-1.26px;">Q1 Reports to PDF</span>
<span class="t" style="left:525.53px;top:310.57px;font-size:24.34px;color:#6c7082;letter-spacing:0.56px;">3 source file(s), target PDF</span>
<span class="t" style="left:1487.17px;top:272.77px;font-size:20.85px;color:#6c7082;letter-spacing:0.45px;">Available until 14 May 2026</span>
<span class="t" style="left:1766.92px;top:272.77px;font-size:20.85px;color:#6c7082;letter-spacing:0.57px;">Created 14 Apr 2026, 20:56</span>
<div style="left:525.25px;top:357.25px;width:362px;height:126.5px;border-radius:11px;background:#fcfcfd;border:1.500px solid #ebedf2;box-sizing:border-box;"></div>
<span class="t" style="left:547.67px;top:392.77px;font-size:20.85px;color:#6c7082;letter-spacing:0.68px;">Total files</span>
<span class="t" style="left:548.5px;top:436.69px;font-size:31.2px;color:#09090b;font-weight:700;">3</span>
<div style="left:908.55px;top:357.25px;width:362px;height:126.5px;border-radius:11px;background:#fcfcfd;border:1.500px solid #ebedf2;box-sizing:border-box;"></div>
<span class="t" style="left:930.97px;top:392.77px;font-size:20.85px;color:#6c7082;letter-spacing:0.69px;">Completed</span>
<span class="t" style="left:931.8px;top:436.69px;font-size:31.2px;color:#09090b;font-weight:700;">3</span>
<div style="left:1291.85px;top:357.25px;width:362px;height:126.5px;border-radius:11px;background:#fcfcfd;border:1.500px solid #ebedf2;box-sizing:border-box;"></div>
<span class="t" style="left:1314.27px;top:392.77px;font-size:20.85px;color:#6c7082;letter-spacing:0.16px;">Failed</span>
<span class="t" style="left:1315.1px;top:436.69px;font-size:31.2px;color:#09090b;font-weight:700;">0</span>
<div style="left:1675.15px;top:357.25px;width:362px;height:126.5px;border-radius:11px;background:#fcfcfd;border:1.500px solid #ebedf2;box-sizing:border-box;"></div>
<span class="t" style="left:1697.57px;top:392.77px;font-size:20.85px;color:#6c7082;letter-spacing:0.59px;">Outputs</span>
<span class="t" style="left:1698.4px;top:436.69px;font-size:31.2px;color:#09090b;font-weight:700;">3</span>
<span class="t" style="left:525.03px;top:528.57px;font-size:24.34px;color:#09090b;letter-spacing:0.85px;-webkit-text-stroke:0.49px;">Batch progress</span>
<span class="t" style="left:1973.33px;top:528.32px;font-size:24.34px;color:#6c7082;letter-spacing:0.12px;">100%</span>
<div style="left:525.25px;top:559px;width:1512.75px;height:13.5px;border-radius:7px;background:#18181b;"></div>
<div style="left:525.25px;top:601.5px;width:308.25px;height:63px;border-radius:11px;background:#fcfcfd;border:1.500px solid #ebedf2;box-sizing:border-box;"></div>
<svg class="ic" style="left:547.5px;top:619.25px;color:#6c7082;" width="27.5" height="27.5" viewBox="0 0 24 24" fill="none" stroke="#6c7082" stroke-width="1.9" stroke-linecap="round" stroke-linejoin="round"><path d="M21 12a9 9 0 1 1-6.219-8.560" transform="rotate(-92 12 12)"/></svg>
<span class="t" style="left:588.78px;top:632.82px;font-size:24.34px;color:#6c7082;letter-spacing:0.74px;">Preparing batch zip</span>
<div style="left:482.8px;top:749.8px;width:1596.7px;height:620.8px;border-radius:17.5px;background:#fff;border:1.700px solid #e5e7ef;box-shadow:0 1.500px 3px rgba(15,23,42,.07);box-sizing:border-box;"></div>
<span class="t" style="left:524.89px;top:807.38px;font-size:27.77px;color:#09090b;font-weight:700;letter-spacing:-0.81px;">Source Files</span>
<span class="t" style="left:525.03px;top:847.82px;font-size:24.34px;color:#6c7082;letter-spacing:0.69px;">Per-item status, timing, and retry controls.</span>
<div style="left:525.25px;top:907.5px;width:1512.5px;height:125.75px;border-radius:11px;background:#fff;border:1.500px solid #ebedf2;box-sizing:border-box;"></div>
<span class="t" style="left:554.28px;top:952.32px;font-size:24.34px;color:#09090b;letter-spacing:1.3px;-webkit-text-stroke:0.49px;">westbury-q1-2026-report.docx</span>
<span class="t" style="left:554.42px;top:991.52px;font-size:20.85px;color:#6c7082;letter-spacing:0.02px;"><span>DOCX</span><i class="b" style="margin:-1.500px 16.5px 0"></i><span>180.0 KB</span><i class="b" style="margin:-1.500px 16.5px 0"></i><span>1 output</span><i class="b" style="margin:-1.500px 16.5px 0"></i><span>7.2s</span></span>
<div style="left:1861.75px;top:936.25px;width:146.25px;height:36.5px;border-radius:10.5px;background:#18181b;box-shadow:0 1px 3px rgba(0,0,0,.2);"></div>
<span class="t" style="left:1880.67px;top:954.02px;font-size:20.85px;color:#fff;font-weight:700;letter-spacing:0.25px;">Completed</span>
<div style="left:525.25px;top:1055.4px;width:1512.5px;height:125.75px;border-radius:11px;background:#fff;border:1.500px solid #ebedf2;box-sizing:border-box;"></div>
<span class="t" style="left:554.28px;top:1100.22px;font-size:24.34px;color:#09090b;letter-spacing:1.19px;-webkit-text-stroke:0.49px;">financial-summary-march.docx</span>
<span class="t" style="left:554.42px;top:1139.42px;font-size:20.85px;color:#6c7082;letter-spacing:0.11px;"><span>DOCX</span><i class="b" style="margin:-1.500px 16.5px 0"></i><span>95.0 KB</span><i class="b" style="margin:-1.500px 16.5px 0"></i><span>1 output</span><i class="b" style="margin:-1.500px 16.5px 0"></i><span>7.5s</span></span>
<div style="left:1861.75px;top:1084.15px;width:146.25px;height:36.5px;border-radius:10.5px;background:#18181b;box-shadow:0 1px 3px rgba(0,0,0,.2);"></div>
<span class="t" style="left:1880.67px;top:1101.92px;font-size:20.85px;color:#fff;font-weight:700;letter-spacing:0.25px;">Completed</span>
<div style="left:525.25px;top:1203.3px;width:1512.5px;height:125.75px;border-radius:11px;background:#fff;border:1.500px solid #ebedf2;box-sizing:border-box;"></div>
<span class="t" style="left:554.28px;top:1248.12px;font-size:24.34px;color:#09090b;letter-spacing:1.09px;-webkit-text-stroke:0.49px;">team-review-q1.odt</span>
<span class="t" style="left:554.42px;top:1287.32px;font-size:20.85px;color:#6c7082;letter-spacing:-0.1px;"><span>ODT</span><i class="b" style="margin:-1.500px 16.5px 0"></i><span>71.5 KB</span><i class="b" style="margin:-1.500px 16.5px 0"></i><span>1 output</span><i class="b" style="margin:-1.500px 16.5px 0"></i><span>7.8s</span></span>
<div style="left:1861.75px;top:1232.05px;width:146.25px;height:36.5px;border-radius:10.5px;background:#18181b;box-shadow:0 1px 3px rgba(0,0,0,.2);"></div>
<span class="t" style="left:1880.67px;top:1249.82px;font-size:20.85px;color:#fff;font-weight:700;letter-spacing:0.25px;">Completed</span>
<div style="left:482.8px;top:1414.2px;width:1596.7px;height:272.8px;border-radius:17.5px;background:#fff;border:1.700px solid #e5e7ef;box-shadow:0 1.500px 3px rgba(15,23,42,.07);box-sizing:border-box;"></div>
<span class="t" style="left:524.89px;top:1470.63px;font-size:27.77px;color:#09090b;font-weight:700;letter-spacing:-0.56px;">Generated Outputs</span>
</main>
</body></html>
